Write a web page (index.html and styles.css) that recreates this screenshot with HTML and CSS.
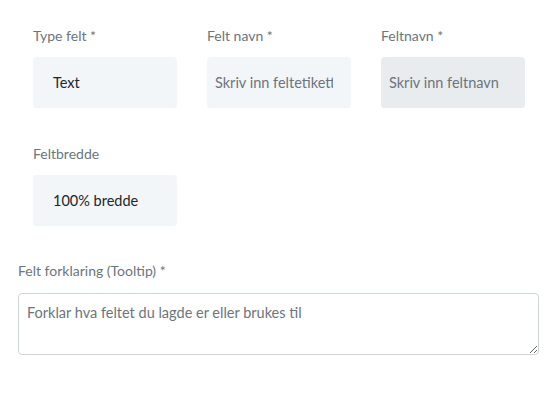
FILE: index.html
```html
<!DOCTYPE html>
<html>
<head>
<meta charset="utf-8">
<link rel="stylesheet" href="styles.css">
</head>
<body>
<div class="form">
  <div class="grid">
    <div class="field">
      <label class="label">Type felt *</label>
      <div class="box">Text</div>
    </div>
    <div class="field">
      <label class="label">Felt navn *</label>
      <div class="box placeholder"><span class="clip">Skriv inn feltetikett</span></div>
    </div>
    <div class="field">
      <label class="label">Feltnavn *</label>
      <div class="box placeholder disabled"><span class="clip">Skriv inn feltnavn</span></div>
    </div>
    <div class="field">
      <label class="label">Feltbredde</label>
      <div class="box">100% bredde</div>
    </div>
  </div>
  <div class="tooltip-field">
    <label class="label">Felt forklaring (Tooltip) *</label>
    <textarea class="textarea" placeholder="Forklar hva feltet du lagde er eller brukes til"></textarea>
  </div>
</div>
</body>
</html>
```
FILE: styles.css
```css
* { box-sizing: border-box; }
body {
  margin: 0;
  background: #fff;
  font-family: Lato, "Noto Sans", sans-serif;
  font-size: 14px;
}
.form {
  padding: 27px 21px 0 18px;
}
.grid {
  display: grid;
  grid-template-columns: repeat(3, 144px);
  column-gap: 30px;
  row-gap: 37px;
  padding-left: 15px;
}
.field {
  display: flex;
  flex-direction: column;
  min-width: 0;
}
.label {
  color: #6c757d;
  line-height: 18px;
  margin-bottom: 12px;
}
.box {
  height: 51px;
  width: 144px;
  background: #f3f6f9;
  border-radius: 4px;
  padding: 0 20px;
  display: flex;
  align-items: center;
  color: #212529;
  font-size: 14.5px;
  white-space: nowrap;
  box-shadow: 0 0 1px rgba(0,0,0,0.04);
}
.box.placeholder {
  padding: 0 18px 0 8px;
  color: #6c757d;
}
.clip {
  flex: 1 1 0;
  overflow: hidden;
  white-space: nowrap;
  min-width: 0;
}
.box.disabled {
  background: #e9ecef;
}
.tooltip-field {
  margin-top: 36px;
  display: flex;
  flex-direction: column;
}
.tooltip-field .label {
  margin-bottom: 13px;
}
.textarea {
  height: 62px;
  width: 521px;
  border: 1px solid #ced4da;
  border-radius: 4px;
  padding: 9px 8px 8px;
  font-family: inherit;
  font-size: 14.5px;
  line-height: 20px;
  color: #495057;
  resize: vertical;
}
.textarea::placeholder {
  color: #6c757d;
  opacity: 1;
}
```
